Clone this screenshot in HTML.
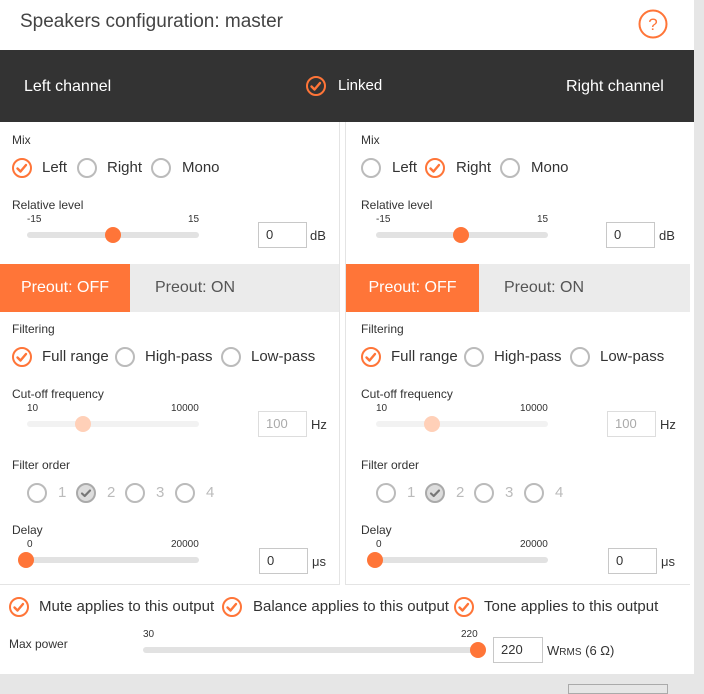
<!DOCTYPE html>
<html><head><meta charset="utf-8">
<style>
*{margin:0;padding:0;box-sizing:border-box}
body{width:704px;height:687px;background:#e6e6e6;position:relative;overflow:hidden;font-family:"Liberation Sans",sans-serif;color:#333}
.a{position:absolute;white-space:nowrap}
.panel{position:absolute;left:0;top:0;width:694px;height:674px;background:#fff}
.s{font-size:12px;line-height:14px}
.xs{font-size:10px;line-height:12px}
.m{font-size:15px;line-height:18px}
.track{position:absolute;height:6px;border-radius:3px;background:#e2e2e2}
.thumb{position:absolute;width:16px;height:16px;border-radius:50%;background:#ff7538}
.inp{position:absolute;border:1px solid #c8c8c8;background:#fff;font-size:13px;line-height:24px;padding-left:7px}
svg{position:absolute}
</style></head><body>
<div class="panel"></div>
<div class="a" style="left:20px;top:11px;font-size:19px;line-height:22px;color:#444">Speakers configuration: master</div>
<svg style="left:638px;top:9px" width="30" height="30"><circle cx="15" cy="15" r="13.5" fill="none" stroke="#ff7538" stroke-width="2"/><text x="15" y="21" text-anchor="middle" font-family="Liberation Sans" font-size="17" fill="#ff7538">?</text></svg>

<div class="a" style="left:0;top:50px;width:694px;height:72px;background:#333"></div>
<div class="a" style="left:24px;top:77px;font-size:16px;line-height:20px;color:#fff;font-weight:300">Left channel</div>
<div class="a" style="left:566px;top:77px;font-size:16px;line-height:20px;color:#fff">Right channel</div>
<svg style="left:305px;top:75px" width="22" height="22"><circle cx="11" cy="11" r="9" fill="none" stroke="#ff7538" stroke-width="2"/><path d="M6.5 11.5L9.5 14.5L15 8" stroke="#ff7538" stroke-width="2.4" fill="none" stroke-linecap="round" stroke-linejoin="round"/></svg>
<div class="a" style="left:338px;top:77px;font-size:15px;line-height:18px;color:#fff">Linked</div>

<!-- column borders -->
<div class="a" style="left:339px;top:122px;width:1px;height:462px;background:#e4e4e4"></div>
<div class="a" style="left:345px;top:122px;width:1px;height:462px;background:#e4e4e4"></div>
<div class="a" style="left:0;top:584px;width:340px;height:1px;background:#e4e4e4"></div>
<div class="a" style="left:345px;top:584px;width:345px;height:1px;background:#e4e4e4"></div>

<!-- LEFT COLUMN -->
<div class="a s" style="left:12px;top:133px">Mix</div>
<svg style="left:11px;top:157px" width="22" height="22"><circle cx="11" cy="11" r="9" fill="none" stroke="#ff7538" stroke-width="2"/><path d="M6.5 11.5L9.5 14.5L15 8" stroke="#ff7538" stroke-width="2.4" fill="none" stroke-linecap="round" stroke-linejoin="round"/></svg>
<div class="a m" style="left:42px;top:159px">Left</div>
<svg style="left:76px;top:157px" width="22" height="22"><circle cx="11" cy="11" r="9" fill="none" stroke="#bbb" stroke-width="2"/></svg>
<div class="a m" style="left:107px;top:159px">Right</div>
<svg style="left:150px;top:157px" width="22" height="22"><circle cx="11" cy="11" r="9" fill="none" stroke="#bbb" stroke-width="2"/></svg>
<div class="a m" style="left:182px;top:159px">Mono</div>

<div class="a s" style="left:12px;top:198px">Relative level</div>
<div class="a xs" style="left:27px;top:214px">-15</div>
<div class="a xs" style="left:188px;top:214px">15</div>
<div class="track" style="left:27px;top:232px;width:172px"></div>
<div class="thumb" style="left:105px;top:227px"></div>
<div class="inp" style="left:258px;top:222px;width:49px;height:26px">0</div>
<div class="a s" style="left:310px;top:229px;font-size:13px">dB</div>

<div class="a" style="left:0;top:264px;width:130px;height:48px;background:#ff7538;color:#fff;font-size:16px;line-height:48px;text-align:center">Preout: OFF</div>
<div class="a" style="left:130px;top:264px;width:209px;height:48px;background:#ebebeb;color:#555;font-size:16px;line-height:48px;padding-left:25px">Preout: ON</div>

<div class="a s" style="left:12px;top:322px">Filtering</div>
<svg style="left:11px;top:346px" width="22" height="22"><circle cx="11" cy="11" r="9" fill="none" stroke="#ff7538" stroke-width="2"/><path d="M6.5 11.5L9.5 14.5L15 8" stroke="#ff7538" stroke-width="2.4" fill="none" stroke-linecap="round" stroke-linejoin="round"/></svg>
<div class="a m" style="left:42px;top:348px">Full range</div>
<svg style="left:114px;top:346px" width="22" height="22"><circle cx="11" cy="11" r="9" fill="none" stroke="#bbb" stroke-width="2"/></svg>
<div class="a m" style="left:145px;top:348px">High-pass</div>
<svg style="left:220px;top:346px" width="22" height="22"><circle cx="11" cy="11" r="9" fill="none" stroke="#bbb" stroke-width="2"/></svg>
<div class="a m" style="left:251px;top:348px">Low-pass</div>

<div class="a s" style="left:12px;top:387px">Cut-off frequency</div>
<div class="a xs" style="left:27px;top:403px">10</div>
<div class="a xs" style="left:171px;top:403px">10000</div>
<div class="track" style="left:27px;top:421px;width:172px;background:#f2f2f2"></div>
<div class="thumb" style="left:75px;top:416px;background:#ffd0b8"></div>
<div class="inp" style="left:258px;top:411px;width:49px;height:26px;color:#aaa;border-color:#ddd">100</div>
<div class="a s" style="left:311px;top:418px;font-size:13px">Hz</div>

<div class="a s" style="left:12px;top:458px">Filter order</div>
<svg style="left:26px;top:482px" width="22" height="22"><circle cx="11" cy="11" r="9" fill="none" stroke="#bbb" stroke-width="2"/></svg>
<div class="a m" style="left:58px;top:484px;color:#bbb">1</div>
<svg style="left:75px;top:482px" width="22" height="22"><circle cx="11" cy="11" r="9" fill="#ddd" stroke="#aaa" stroke-width="2"/><path d="M7 11.5L9.7 14L15 8.5" stroke="#777" stroke-width="2.2" fill="none" stroke-linecap="round" stroke-linejoin="round"/></svg>
<div class="a m" style="left:107px;top:484px;color:#bbb">2</div>
<svg style="left:124px;top:482px" width="22" height="22"><circle cx="11" cy="11" r="9" fill="none" stroke="#bbb" stroke-width="2"/></svg>
<div class="a m" style="left:156px;top:484px;color:#bbb">3</div>
<svg style="left:174px;top:482px" width="22" height="22"><circle cx="11" cy="11" r="9" fill="none" stroke="#bbb" stroke-width="2"/></svg>
<div class="a m" style="left:206px;top:484px;color:#bbb">4</div>

<div class="a s" style="left:12px;top:523px">Delay</div>
<div class="a xs" style="left:27px;top:539px">0</div>
<div class="a xs" style="left:171px;top:539px">20000</div>
<div class="track" style="left:27px;top:557px;width:172px"></div>
<div class="thumb" style="left:18px;top:552px"></div>
<div class="inp" style="left:259px;top:548px;width:49px;height:26px">0</div>
<div class="a s" style="left:312px;top:555px;font-size:13px">μs</div>

<!-- RIGHT COLUMN -->
<div class="a s" style="left:361px;top:133px">Mix</div>
<svg style="left:360px;top:157px" width="22" height="22"><circle cx="11" cy="11" r="9" fill="none" stroke="#bbb" stroke-width="2"/></svg>
<div class="a m" style="left:392px;top:159px">Left</div>
<svg style="left:424px;top:157px" width="22" height="22"><circle cx="11" cy="11" r="9" fill="none" stroke="#ff7538" stroke-width="2"/><path d="M6.5 11.5L9.5 14.5L15 8" stroke="#ff7538" stroke-width="2.4" fill="none" stroke-linecap="round" stroke-linejoin="round"/></svg>
<div class="a m" style="left:456px;top:159px">Right</div>
<svg style="left:499px;top:157px" width="22" height="22"><circle cx="11" cy="11" r="9" fill="none" stroke="#bbb" stroke-width="2"/></svg>
<div class="a m" style="left:531px;top:159px">Mono</div>

<div class="a s" style="left:361px;top:198px">Relative level</div>
<div class="a xs" style="left:376px;top:214px">-15</div>
<div class="a xs" style="left:537px;top:214px">15</div>
<div class="track" style="left:376px;top:232px;width:172px"></div>
<div class="thumb" style="left:453px;top:227px"></div>
<div class="inp" style="left:606px;top:222px;width:49px;height:26px">0</div>
<div class="a s" style="left:659px;top:229px;font-size:13px">dB</div>

<div class="a" style="left:346px;top:264px;width:133px;height:48px;background:#ff7538;color:#fff;font-size:16px;line-height:48px;text-align:center">Preout: OFF</div>
<div class="a" style="left:479px;top:264px;width:211px;height:48px;background:#ebebeb;color:#555;font-size:16px;line-height:48px;padding-left:25px">Preout: ON</div>

<div class="a s" style="left:361px;top:322px">Filtering</div>
<svg style="left:360px;top:346px" width="22" height="22"><circle cx="11" cy="11" r="9" fill="none" stroke="#ff7538" stroke-width="2"/><path d="M6.5 11.5L9.5 14.5L15 8" stroke="#ff7538" stroke-width="2.4" fill="none" stroke-linecap="round" stroke-linejoin="round"/></svg>
<div class="a m" style="left:391px;top:348px">Full range</div>
<svg style="left:463px;top:346px" width="22" height="22"><circle cx="11" cy="11" r="9" fill="none" stroke="#bbb" stroke-width="2"/></svg>
<div class="a m" style="left:494px;top:348px">High-pass</div>
<svg style="left:569px;top:346px" width="22" height="22"><circle cx="11" cy="11" r="9" fill="none" stroke="#bbb" stroke-width="2"/></svg>
<div class="a m" style="left:600px;top:348px">Low-pass</div>

<div class="a s" style="left:361px;top:387px">Cut-off frequency</div>
<div class="a xs" style="left:376px;top:403px">10</div>
<div class="a xs" style="left:520px;top:403px">10000</div>
<div class="track" style="left:376px;top:421px;width:172px;background:#f2f2f2"></div>
<div class="thumb" style="left:424px;top:416px;background:#ffd0b8"></div>
<div class="inp" style="left:607px;top:411px;width:49px;height:26px;color:#aaa;border-color:#ddd">100</div>
<div class="a s" style="left:660px;top:418px;font-size:13px">Hz</div>

<div class="a s" style="left:361px;top:458px">Filter order</div>
<svg style="left:375px;top:482px" width="22" height="22"><circle cx="11" cy="11" r="9" fill="none" stroke="#bbb" stroke-width="2"/></svg>
<div class="a m" style="left:407px;top:484px;color:#bbb">1</div>
<svg style="left:424px;top:482px" width="22" height="22"><circle cx="11" cy="11" r="9" fill="#ddd" stroke="#aaa" stroke-width="2"/><path d="M7 11.5L9.7 14L15 8.5" stroke="#777" stroke-width="2.2" fill="none" stroke-linecap="round" stroke-linejoin="round"/></svg>
<div class="a m" style="left:456px;top:484px;color:#bbb">2</div>
<svg style="left:473px;top:482px" width="22" height="22"><circle cx="11" cy="11" r="9" fill="none" stroke="#bbb" stroke-width="2"/></svg>
<div class="a m" style="left:505px;top:484px;color:#bbb">3</div>
<svg style="left:523px;top:482px" width="22" height="22"><circle cx="11" cy="11" r="9" fill="none" stroke="#bbb" stroke-width="2"/></svg>
<div class="a m" style="left:555px;top:484px;color:#bbb">4</div>

<div class="a s" style="left:361px;top:523px">Delay</div>
<div class="a xs" style="left:376px;top:539px">0</div>
<div class="a xs" style="left:520px;top:539px">20000</div>
<div class="track" style="left:376px;top:557px;width:172px"></div>
<div class="thumb" style="left:367px;top:552px"></div>
<div class="inp" style="left:608px;top:548px;width:49px;height:26px">0</div>
<div class="a s" style="left:661px;top:555px;font-size:13px">μs</div>

<!-- bottom -->
<svg style="left:8px;top:596px" width="22" height="22"><circle cx="11" cy="11" r="9" fill="none" stroke="#ff7538" stroke-width="2"/><path d="M6.5 11.5L9.5 14.5L15 8" stroke="#ff7538" stroke-width="2.4" fill="none" stroke-linecap="round" stroke-linejoin="round"/></svg>
<div class="a m" style="left:39px;top:598px">Mute applies to this output</div>
<svg style="left:221px;top:596px" width="22" height="22"><circle cx="11" cy="11" r="9" fill="none" stroke="#ff7538" stroke-width="2"/><path d="M6.5 11.5L9.5 14.5L15 8" stroke="#ff7538" stroke-width="2.4" fill="none" stroke-linecap="round" stroke-linejoin="round"/></svg>
<div class="a m" style="left:253px;top:598px">Balance applies to this output</div>
<svg style="left:453px;top:596px" width="22" height="22"><circle cx="11" cy="11" r="9" fill="none" stroke="#ff7538" stroke-width="2"/><path d="M6.5 11.5L9.5 14.5L15 8" stroke="#ff7538" stroke-width="2.4" fill="none" stroke-linecap="round" stroke-linejoin="round"/></svg>
<div class="a m" style="left:484px;top:598px">Tone applies to this output</div>

<div class="a s" style="left:9px;top:637px">Max power</div>
<div class="a xs" style="left:143px;top:629px">30</div>
<div class="a xs" style="left:461px;top:629px">220</div>
<div class="track" style="left:143px;top:647px;width:335px"></div>
<div class="thumb" style="left:470px;top:642px"></div>
<div class="inp" style="left:493px;top:637px;width:50px;height:26px">220</div>
<div class="a" style="left:547px;top:643px;font-size:13px;line-height:16px">W<span style="font-size:10px">RMS</span> (6 Ω)</div>

<div class="a" style="left:568px;top:684px;width:100px;height:10px;border:1px solid #aaa;background:#e6e6e6"></div>
</body></html>
